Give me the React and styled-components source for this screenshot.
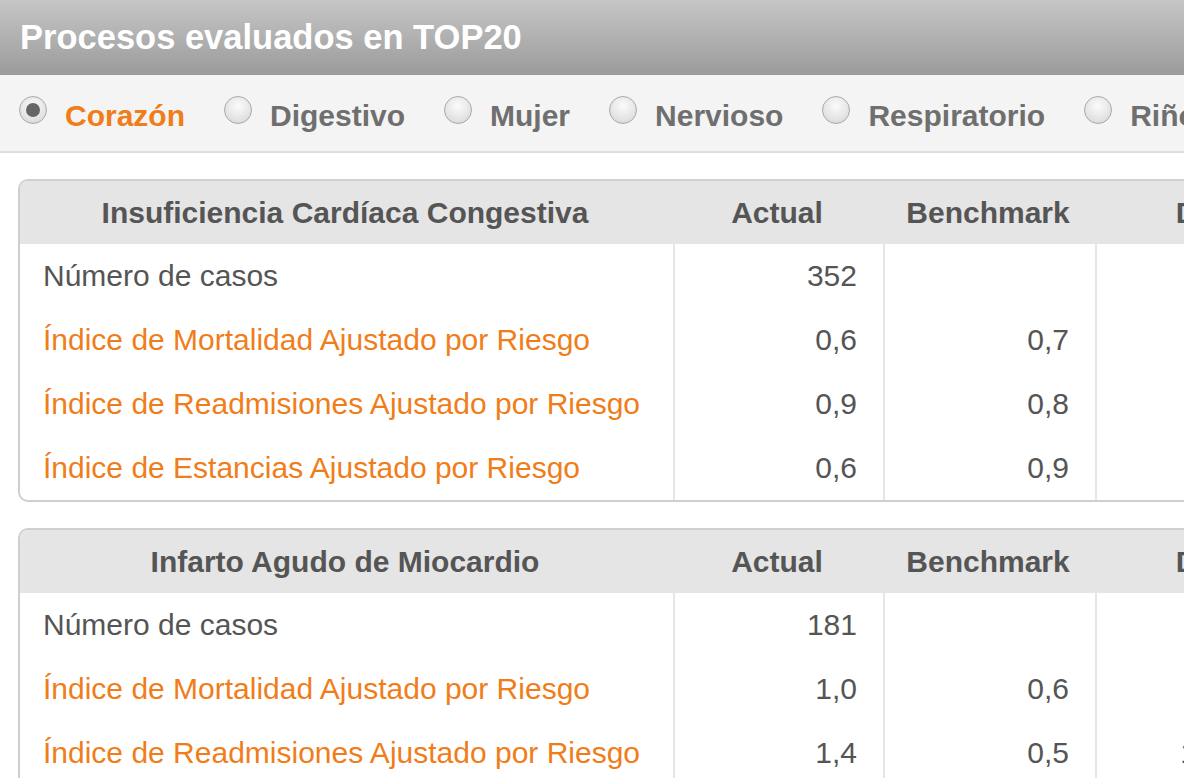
import React from "react";
import styled, {createGlobalStyle} from "styled-components";

const orange = "#f07d19";
const textGray = "#555555";

const GlobalStyle = createGlobalStyle`
  html, body {
    margin: 0;
    padding: 0;
    overflow: hidden;
    background: #ffffff;
  }
  body {
    font-family: "Liberation Sans", Arial, sans-serif;
  }
`;

const Page = styled.div`
  width: 1184px;
  height: 778px;
  overflow: hidden;
  background: #ffffff;
`;

const TitleBar = styled.div`
  height: 75px;
  display: flex;
  align-items: center;
  padding-left: 20px;
  background: linear-gradient(to bottom, #c6c6c6 0%, #9b9b9b 100%);
`;

const Title = styled.h1`
  margin: 0;
  font-size: 34.5px;
  font-weight: bold;
  color: #ffffff;
  white-space: nowrap;
`;

const RadioBar = styled.div`
  height: 76px;
  display: flex;
  align-items: center;
  padding-left: 19px;
  background: #f4f4f4;
  border-bottom: 2px solid #dddddd;
  white-space: nowrap;
`;

const RadioItem = styled.label`
  display: flex;
  align-items: center;
  gap: 18px;
  margin-right: 39px;
  flex-shrink: 0;
  cursor: pointer;
`;

const RadioCircle = styled.span`
  width: 28px;
  height: 28px;
  margin-top: -6px;
  border-radius: 50%;
  box-sizing: border-box;
  border: 1px solid #a9a9a9;
  background: radial-gradient(circle at 50% 35%, #fbfbfb 0%, #e4e4e4 60%, #d2d2d2 100%);
  display: flex;
  align-items: center;
  justify-content: center;
  flex-shrink: 0;

  &::after {
    content: "";
    width: 14px;
    height: 14px;
    border-radius: 50%;
    background: #666666;
    display: ${({checked}) => (checked ? "block" : "none")};
  }
`;

const RadioLabel = styled.span`
  padding-top: 6px;
  font-size: 30px;
  font-weight: bold;
  color: ${({checked}) => (checked ? orange : "#6f6f6f")};
`;

const Content = styled.div`
  padding: 26px 0 0 18px;
  display: flex;
  flex-direction: column;
  gap: 26px;
`;

const Card = styled.div`
  width: max-content;
  border: 2px solid #cfcfcf;
  border-radius: 10px;
  overflow: hidden;
`;

const Table = styled.table`
  border-collapse: collapse;
  table-layout: fixed;
  font-size: 30px;
  color: ${textGray};
`;

const HeadCell = styled.th`
  height: 63px;
  padding: 0 4px 0 0;
  background: #e5e5e5;
  font-weight: bold;
  text-align: center;
  white-space: nowrap;
  color: ${textGray};
`;

const Cell = styled.td`
  height: 64px;
  padding: 0 26px 0 23px;
  white-space: nowrap;
  text-align: ${({num}) => (num ? "right" : "left")};
  border-left: ${({first}) => (first ? "none" : "2px solid #e6e6e6")};
  color: ${({link}) => (link ? orange : textGray)};
`;

const categories = ["Corazón", "Digestivo", "Mujer", "Nervioso", "Respiratorio", "Riñones"];

const processes = [
  {
    name: "Insuficiencia Cardíaca Congestiva",
    rows: [
      {label: "Número de casos", actual: "352", bench: "", dif: ""},
      {label: "Índice de Mortalidad Ajustado por Riesgo", actual: "0,6", bench: "0,7", dif: "-14,3%", link: true},
      {label: "Índice de Readmisiones Ajustado por Riesgo", actual: "0,9", bench: "0,8", dif: "12,5%", link: true},
      {label: "Índice de Estancias Ajustado por Riesgo", actual: "0,6", bench: "0,9", dif: "-33,3%", link: true},
    ],
  },
  {
    name: "Infarto Agudo de Miocardio",
    rows: [
      {label: "Número de casos", actual: "181", bench: "", dif: ""},
      {label: "Índice de Mortalidad Ajustado por Riesgo", actual: "1,0", bench: "0,6", dif: "66,7%", link: true},
      {label: "Índice de Readmisiones Ajustado por Riesgo", actual: "1,4", bench: "0,5", dif: "180,0%", link: true},
      {label: "Índice de Estancias Ajustado por Riesgo", actual: "0,7", bench: "0,8", dif: "-12,5%", link: true},
    ],
  },
];

function ProcessTable({process}) {
  return (
    <Card>
      <Table>
        <colgroup>
          <col style={{width: 654}} />
          <col style={{width: 210}} />
          <col style={{width: 212}} />
          <col style={{width: 212}} />
        </colgroup>
        <thead>
          <tr>
            <HeadCell>{process.name}</HeadCell>
            <HeadCell>Actual</HeadCell>
            <HeadCell>Benchmark</HeadCell>
            <HeadCell>Dif.</HeadCell>
          </tr>
        </thead>
        <tbody>
          {process.rows.map((row) => (
            <tr key={row.label}>
              <Cell first link={row.link}>{row.label}</Cell>
              <Cell num>{row.actual}</Cell>
              <Cell num>{row.bench}</Cell>
              <Cell num>{row.dif}</Cell>
            </tr>
          ))}
        </tbody>
      </Table>
    </Card>
  );
}

export default function App() {
  const [selected, setSelected] = React.useState("Corazón");

  return (
    <Page>
      <GlobalStyle />
      <TitleBar>
        <Title>Procesos evaluados en TOP20</Title>
      </TitleBar>
      <RadioBar>
        {categories.map((cat) => (
          <RadioItem key={cat} onClick={() => setSelected(cat)}>
            <RadioCircle checked={selected === cat} />
            <RadioLabel checked={selected === cat}>{cat}</RadioLabel>
          </RadioItem>
        ))}
      </RadioBar>
      <Content>
        {processes.map((p) => (
          <ProcessTable key={p.name} process={p} />
        ))}
      </Content>
    </Page>
  );
}
